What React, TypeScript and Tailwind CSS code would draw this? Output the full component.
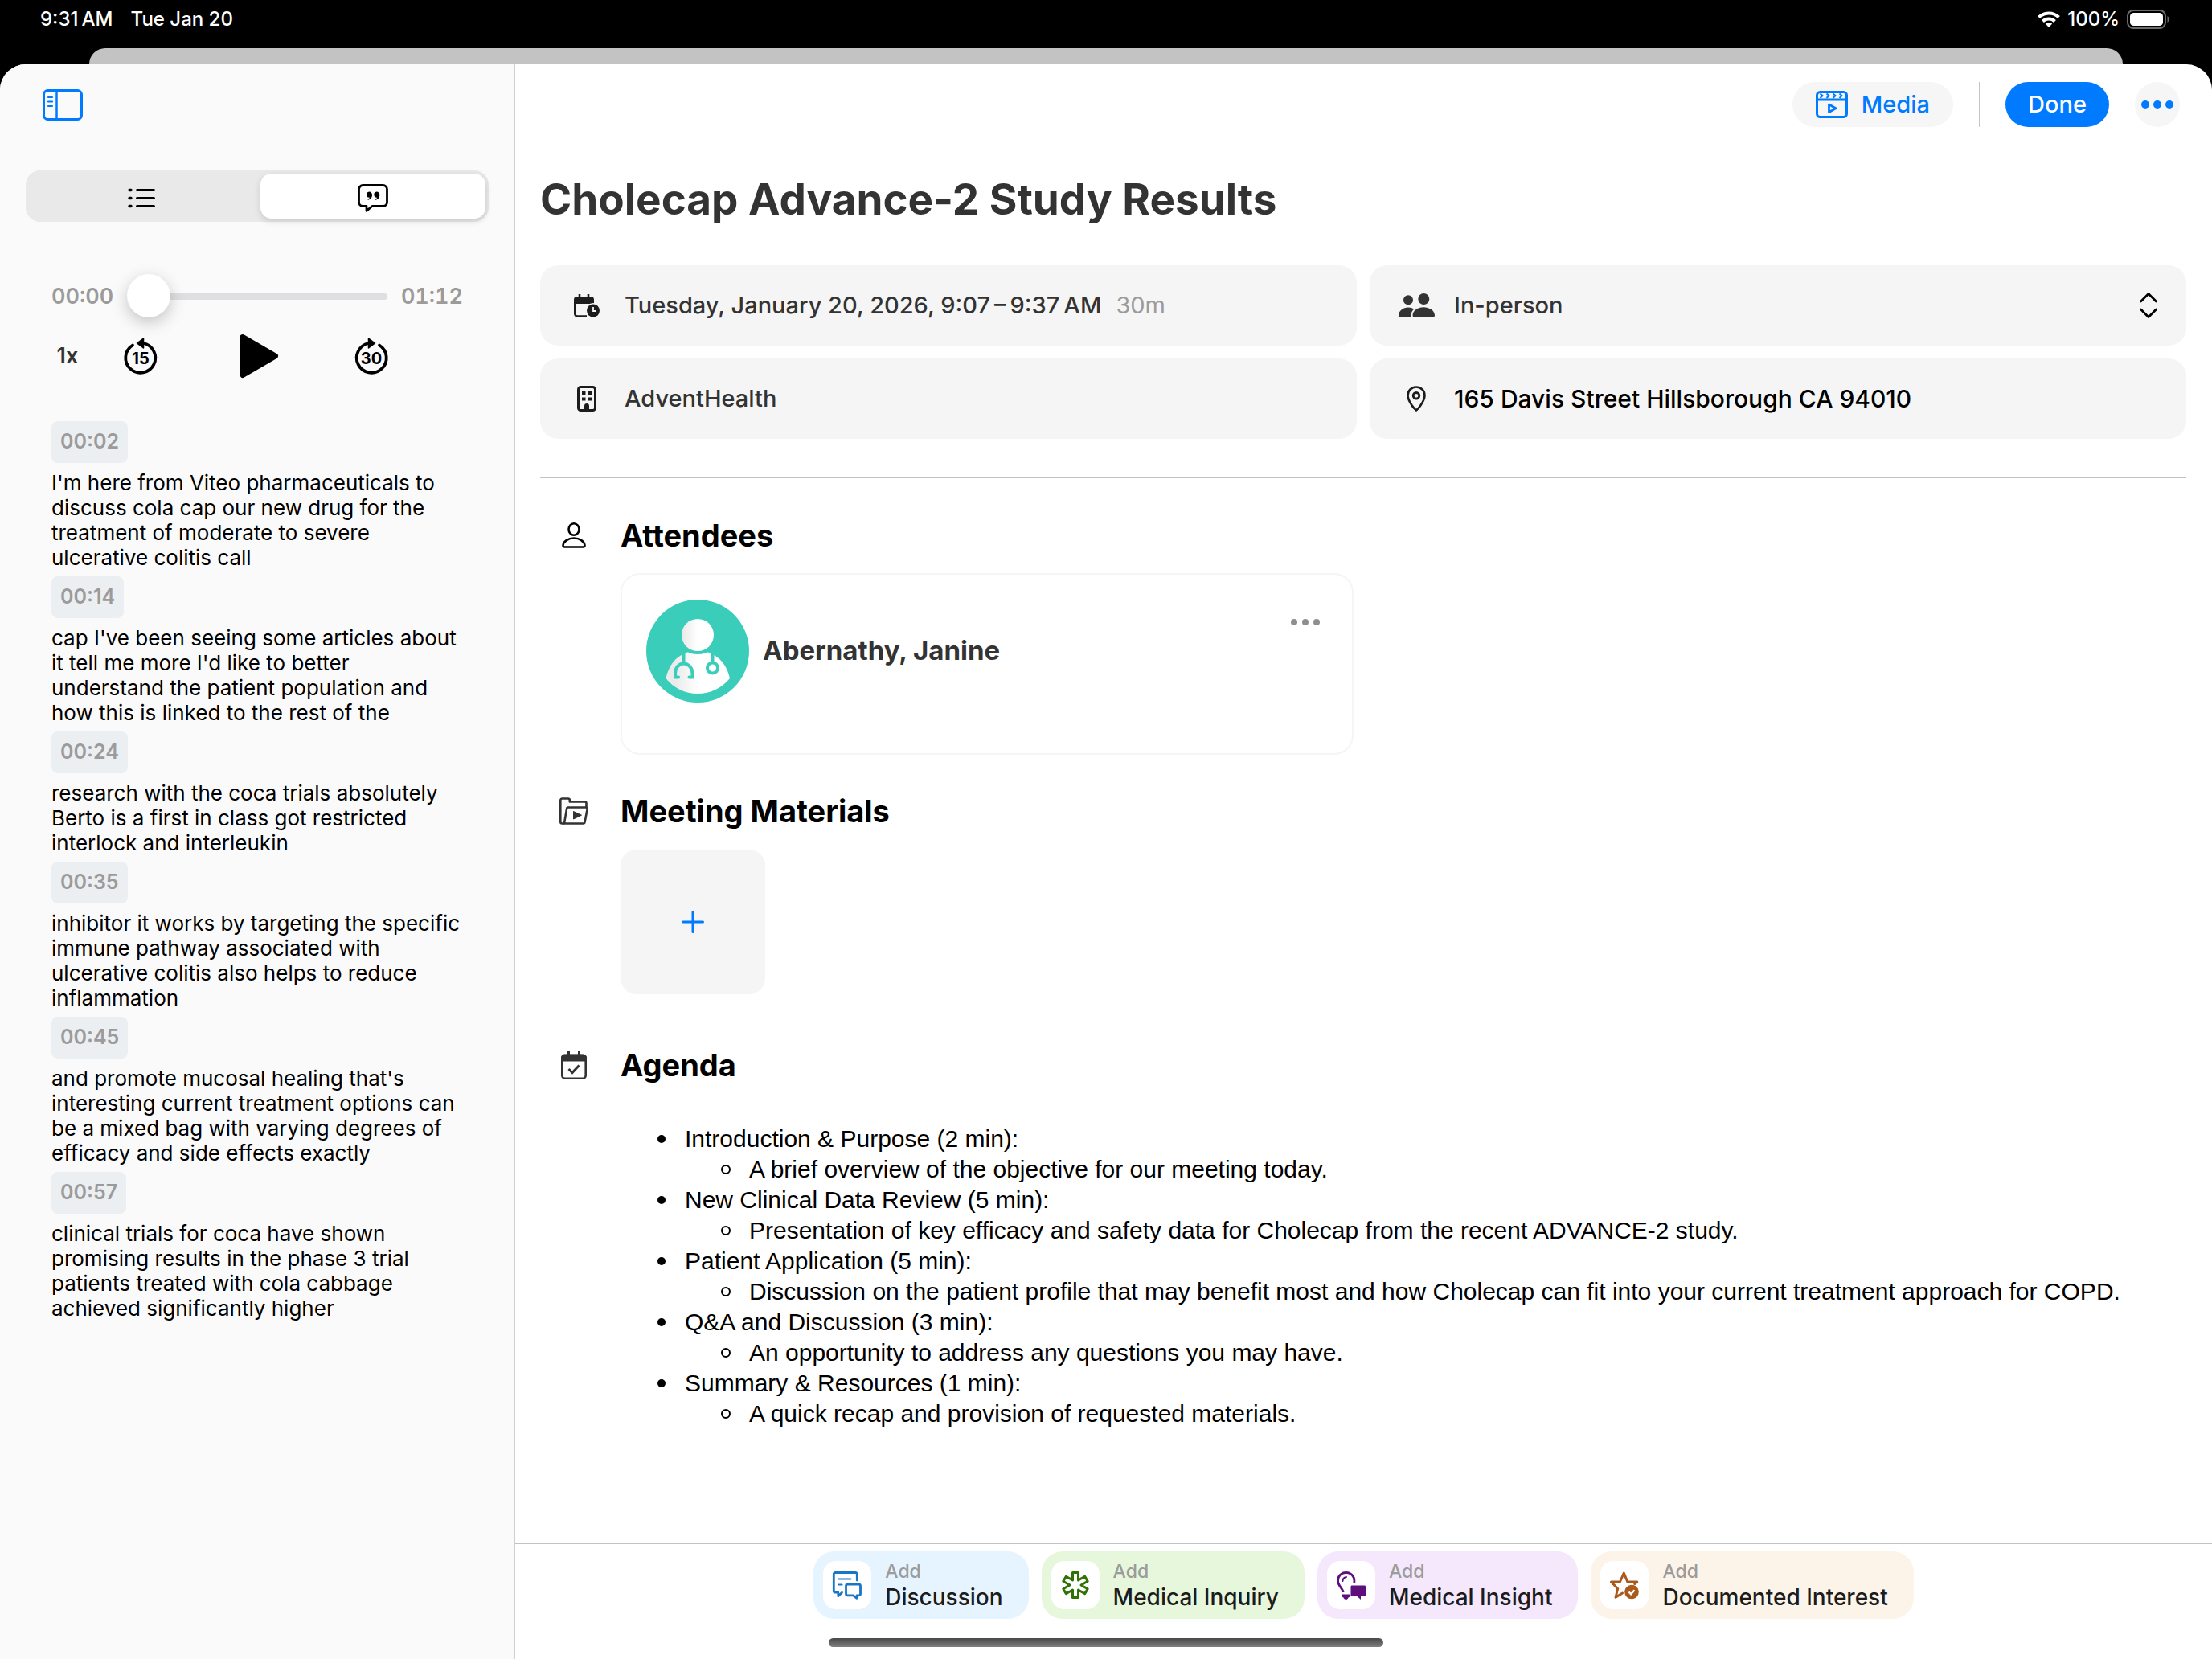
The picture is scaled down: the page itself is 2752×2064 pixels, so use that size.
import type { ReactNode } from "react";

const BLUE = "#007aff";

type IconProps = { w: number; h: number; children: ReactNode };

function Icon({ w, h, children }: IconProps) {
  return (
    <svg width={w} height={h} viewBox={`0 0 ${w} ${h}`} fill="none" aria-hidden="true" className="shrink-0 overflow-visible">
      {children}
    </svg>
  );
}

function WifiIcon() {
  return (
    <Icon w={28} h={20}>
      <g stroke="#fff" strokeWidth="4">
        <path d="M1.500 7.500a18 18 0 0 1 25 0" />
        <path d="M6.500 12.500a11 11 0 0 1 15 0" />
      </g>
      <path d="M14 20l-4.200-4.400a6 6 0 0 1 8.400 0z" fill="#fff" />
    </Icon>
  );
}

function BatteryIcon() {
  return (
    <Icon w={54} h={24}>
      <rect x="1" y="1" width="47" height="22" rx="7" stroke="#6b6b6b" strokeWidth="2" />
      <rect x="4" y="4" width="41" height="16" rx="4.500" fill="#fff" />
      <path d="M50.500 8v8a4.500 4.500 0 0 0 0-8z" fill="#6b6b6b" />
    </Icon>
  );
}

function SidebarIcon() {
  return (
    <Icon w={50} h={39}>
      <g stroke={BLUE} strokeWidth="3">
        <rect x="1.500" y="1.500" width="47" height="36" rx="5" />
        <path d="M17.500 2v35" strokeWidth="2.500" />
        <path d="M7 10h5M7 15.500h5M7 21h5" strokeWidth="2.200" strokeLinecap="round" />
      </g>
    </Icon>
  );
}

function ListIcon() {
  return (
    <Icon w={34} h={24}>
      <path d="M11.500 2.500h21M11.500 12.500h21M11.500 22.500h21" stroke="#000" strokeWidth="3" strokeLinecap="round" />
      <path d="M2 2.500h2M2 12.500h2M2 22.500h2" stroke="#000" strokeWidth="3.400" strokeLinecap="round" />
    </Icon>
  );
}

function QuoteIcon() {
  return (
    <Icon w={38} h={35}>
      <path
        d="M6.500 1.500h25a5 5 0 0 1 5 5v16a5 5 0 0 1-5 5H18l-7 5.800v-5.800H6.500a5 5 0 0 1-5-5v-16a5 5 0 0 1 5-5z"
        stroke="#000"
        strokeWidth="2.800"
        strokeLinejoin="round"
      />
      <path
        d="M14.300 9.500a3.700 3.700 0 0 1 3.700 3.900c0 3.400-2 5.800-5.200 6.300l-.4-1c1.500-.5 2.300-1.200 2.600-2a3.600 3.600 0 1 1-.7-7.200zM23.600 9.500a3.700 3.700 0 0 1 3.700 3.900c0 3.400-2 5.800-5.200 6.300l-.4-1c1.500-.5 2.300-1.200 2.600-2a3.600 3.600 0 1 1-.7-7.200z"
        fill="#000"
      />
    </Icon>
  );
}

function SkipIcon({ seconds, forward = false }: { seconds: number; forward?: boolean }) {
  return (
    <Icon w={44} h={48}>
      <g transform={forward ? "translate(44 0) scale(-1 1)" : undefined}>
        <path d="M25 8a18.500 18.500 0 1 1-13 2.500" stroke="#000" strokeWidth="3.800" strokeLinecap="round" />
        <path d="M17.500 8l8-6v12z" fill="#000" stroke="#000" strokeWidth="1.500" strokeLinejoin="round" />
      </g>
      <text x="22" y="33.500" textAnchor="middle" fontSize="20" fontWeight="700" fill="#000">
        {seconds}
      </text>
    </Icon>
  );
}

function PlayIcon() {
  return (
    <Icon w={48} h={54}>
      <path d="M4 3.500L44.500 27 4 50.500z" fill="#000" stroke="#000" strokeWidth="7" strokeLinejoin="round" />
    </Icon>
  );
}

function MediaIcon() {
  return (
    <Icon w={40} h={34}>
      <g stroke={BLUE} strokeWidth="3" strokeLinejoin="round">
        <rect x="1.500" y="1.500" width="37" height="31" rx="4" />
        <path d="M2 11h36" />
        <path d="M5.500 3.500l3 2.500-3 3M13.500 3.500l3 2.500-3 3M21.500 3.500l3 2.500-3 3M29.500 3.500l3 2.500-3 3" strokeWidth="2" />
        <path d="M16.500 17v9.500l8.500-4.800z" strokeWidth="2.800" />
      </g>
    </Icon>
  );
}

function DotsIcon({ color, r, gap }: { color: string; r: number; gap: number }) {
  const w = gap * 2 + r * 2;
  return (
    <Icon w={w} h={r * 2}>
      <circle cx={r} cy={r} r={r} fill={color} />
      <circle cx={r + gap} cy={r} r={r} fill={color} />
      <circle cx={r + gap * 2} cy={r} r={r} fill={color} />
    </Icon>
  );
}

function CalendarClockIcon() {
  return (
    <Icon w={33} h={29}>
      <path d="M7 0v6M18 0v6" stroke="#1c1c1c" strokeWidth="2.600" />
      <path d="M0 12V7a4 4 0 0 1 4-4h17a4 4 0 0 1 4 4v5z" fill="#1c1c1c" />
      <path d="M1.200 10v14.500a3 3 0 0 0 3 3H16" stroke="#1c1c1c" strokeWidth="2.400" />
      <circle cx="24" cy="20.500" r="9.500" fill="#f5f5f5" />
      <circle cx="24" cy="20.500" r="8" fill="#1c1c1c" />
      <path d="M24 16v5h4" stroke="#f5f5f5" strokeWidth="1.800" />
    </Icon>
  );
}

function BuildingIcon() {
  return (
    <Icon w={24} h={32}>
      <rect x="1.500" y="1.500" width="21" height="29" rx="3" stroke="#1c1c1c" strokeWidth="3" />
      <path d="M6 7h4.500v4H6zM13.500 7H18v4h-4.500zM6 14.500h4.500v4H6zM13.500 14.500H18v4h-4.500zM9 31v-6a3 3 0 0 1 6 0v6z" fill="#1c1c1c" />
    </Icon>
  );
}

function PeopleIcon() {
  return (
    <Icon w={45} h={30}>
      <g fill="#333">
        <circle cx="12" cy="8.300" r="6" />
        <circle cx="31.300" cy="7" r="7" />
        <path d="M17.500 29.500V27.500c0-5.600 6-10.300 13.700-10.300S45 21.900 45 27.500c0 1.300-.8 2-2 2H19.500c-1.200 0-2-.7-2-2z" />
        <path d="M0 27.500C0 22 5.400 17.500 12 17.500c2.700 0 5.200.7 7.200 2-2.400 2.200-3.700 5-3.700 8 0 .7.100 1.400.4 2H2c-1.200 0-2-.7-2-2z" />
      </g>
    </Icon>
  );
}

function PinIcon() {
  return (
    <Icon w={24} h={32}>
      <path
        d="M12 1.500c5.900 0 10.500 4.600 10.500 10.500 0 4.200-2.400 8.400-5 12.200-1.800 2.700-4 5-5.500 6.300-1.500-1.300-3.700-3.600-5.500-6.300-2.600-3.800-5-8-5-12.200C1.500 6.100 6.100 1.500 12 1.500z"
        stroke="#1c1c1c"
        strokeWidth="2.600"
        strokeLinejoin="round"
      />
      <circle cx="12" cy="12.300" r="3.800" stroke="#1c1c1c" strokeWidth="2.800" />
    </Icon>
  );
}

function ChevronsIcon() {
  return (
    <Icon w={22} h={32}>
      <path d="M1.500 11L11 1.500l9.500 9.500M1.500 21l9.500 9.500 9.500-9.500" stroke="#000" strokeWidth="2.800" strokeLinecap="round" strokeLinejoin="round" />
    </Icon>
  );
}

function PersonIcon() {
  return (
    <Icon w={30} h={32}>
      <g stroke="#000" strokeWidth="2.600">
        <ellipse cx="15" cy="8.500" rx="6.500" ry="7.200" />
        <path d="M1.500 28.500c.4-5 6.500-9 13.500-9s13.100 4 13.500 9c0 1.400-.8 2-2 2h-23c-1.200 0-2-.6-2-2z" />
      </g>
    </Icon>
  );
}

function FolderPlayIcon() {
  return (
    <Icon w={36} h={34}>
      <g stroke="#333" strokeWidth="2.600" strokeLinejoin="round">
        <path d="M6 32.500H3.300a2 2 0 0 1-2-2v-27a2 2 0 0 1 2-2h7.500a2 2 0 0 1 2 2V5.500h18.700a2 2 0 0 1 2 2V12" />
        <path d="M10.500 12.500h22.300a1.800 1.800 0 0 1 1.800 2.200l-3 16a2 2 0 0 1-2 1.800H6l3-18a2 2 0 0 1 1.500-2z" />
      </g>
      <path d="M17.500 17.500v9.500l10-4.800z" fill="#333" stroke="#333" strokeWidth="1" strokeLinejoin="round" />
    </Icon>
  );
}

function CalendarCheckIcon() {
  return (
    <Icon w={32} h={36}>
      <rect x="1.300" y="6" width="29.400" height="28.700" rx="3.500" stroke="#333" strokeWidth="2.600" />
      <path d="M0 13.500V9a4.500 4.500 0 0 1 4.500-4.500h23A4.500 4.500 0 0 1 32 9v4.500z" fill="#333" />
      <path d="M9.500 0v6M22.500 0v6" stroke="#333" strokeWidth="3" />
      <path d="M9.500 23l4.500 4.500 8.500-9" stroke="#333" strokeWidth="3" />
    </Icon>
  );
}

function DoctorAvatar() {
  return (
    <Icon w={128} h={128}>
      <defs>
        <linearGradient id="coat" gradientUnits="userSpaceOnUse" x1="26" y1="0" x2="64" y2="0">
          <stop offset="0.300" stopColor="#ebebeb" />
          <stop offset="1" stopColor="#fff" />
        </linearGradient>
        <linearGradient id="face" gradientUnits="userSpaceOnUse" x1="44" y1="0" x2="64" y2="0">
          <stop offset="0.100" stopColor="#ebebeb" />
          <stop offset="1" stopColor="#fff" />
        </linearGradient>
      </defs>
      <circle cx="64" cy="64" r="64" fill="#39cdba" />
      <circle cx="64" cy="44" r="20" fill="url(#face)" />
      <path
        d="M50 66c2-1 3 0 5 .7 6 1.800 12 1.800 18 0 2-.7 3-1.700 5-.7 14 5 23 17 26 32-10 12-24 19-40 19s-30-7-39.500-19C27.500 83 36 71 50 66z"
        fill="url(#coat)"
      />
      <g stroke="#39cdba" strokeWidth="4">
        <path d="M46.500 64v16" />
        <path d="M40 96.500h-4V92c0-7 4.500-12.500 10.500-12.500S57.500 85 57.500 92v4.500h-4" strokeLinecap="round" />
        <path d="M82.500 64v13" />
        <circle cx="82.500" cy="85" r="6.500" fill="#fff" />
      </g>
    </Icon>
  );
}

function DiscussionIcon() {
  return (
    <Icon w={36} h={34}>
      <g stroke="#1976c5" strokeWidth="2.800" strokeLinejoin="round" strokeLinecap="round">
        <path d="M30.300 11V3.500a2 2 0 0 0-2-2h-25a2 2 0 0 0-2 2v20.700a2 2 0 0 0 2 2h3.500v4.500l4.700-4.500" />
        <path d="M7.500 9.500h15M7.500 16.500h4" strokeWidth="2.200" />
        <path d="M18.500 16.200h14a2 2 0 0 1 2 2v9.600a2 2 0 0 1-2 2h-2.500v3.500l-4.500-3.500h-7a2 2 0 0 1-2-2v-9.600a2 2 0 0 1 2-2z" />
      </g>
    </Icon>
  );
}

// Six-armed star: two outer corners per arm and one inner corner between neighbours.
const ASTERISK_POINTS = [0, 1, 2, 3, 4, 5]
  .flatMap((arm) => {
    const a = (arm * Math.PI) / 3 - Math.PI / 2;
    const b = a + Math.PI / 6;
    const at = (l: number, w: number) => [18 + l * Math.cos(a) - w * Math.sin(a), 17 + l * Math.sin(a) + w * Math.cos(a)];
    return [at(15.5, -3.5), at(15.5, 3.5), [18 + 7 * Math.cos(b), 17 + 7 * Math.sin(b)]];
  })
  .map((p) => p.join(","))
  .join(" ");

function InquiryIcon() {
  return (
    <Icon w={36} h={34}>
      <polygon points={ASTERISK_POINTS} stroke="#2f7304" strokeWidth="3" strokeLinejoin="round" />
    </Icon>
  );
}

function InsightIcon() {
  return (
    <Icon w={36} h={35}>
      <path d="M8 26c0-5-6.500-7.500-6.500-14.500a10.200 10.200 0 0 1 20.400 0V15" stroke="#5f0f7c" strokeWidth="2.800" />
      <path d="M7.500 12c0-2.700 1.500-4.500 4.500-5" stroke="#5f0f7c" strokeWidth="2" strokeLinecap="round" />
      <path d="M6.500 28.500h10c0 3-1 4-2 4-.5 1.500-1.500 2.500-3 2.500s-2.500-1-3-2.500c-1 0-2-1-2-4z" fill="#5f0f7c" />
      <path d="M19 17.500h15.500c1 0 1.500.5 1.500 1.500v10.500c0 1-.5 1.500-1.500 1.500H30v4l-4.500-4H19c-1 0-1.500-.5-1.500-1.500V19c0-1 .5-1.500 1.500-1.500z" fill="#5f0f7c" />
    </Icon>
  );
}

function InterestIcon() {
  return (
    <Icon w={36} h={34}>
      <path
        d="M15.500 27L7 32.300l2.700-10.800L1.500 13h11L17.300 2l4.500 11h12l-3 2.500"
        stroke="#a9591b"
        strokeWidth="3"
        strokeLinejoin="round"
        strokeLinecap="round"
      />
      <circle cx="27" cy="25.500" r="8.800" fill="#a9591b" />
      <path d="M23.500 25.500l2.600 2.800 4.400-5" stroke="#fff" strokeWidth="2.400" />
    </Icon>
  );
}

const TRANSCRIPT = [
  { time: "00:02", lines: ["I'm here from Viteo pharmaceuticals to", "discuss cola cap our new drug for the", "treatment of moderate to severe", "ulcerative colitis call"] },
  { time: "00:14", lines: ["cap I've been seeing some articles about", "it tell me more I'd like to better", "understand the patient population and", "how this is linked to the rest of the"] },
  { time: "00:24", lines: ["research with the coca trials absolutely", "Berto is a first in class got restricted", "interlock and interleukin"] },
  { time: "00:35", lines: ["inhibitor it works by targeting the specific", "immune pathway associated with", "ulcerative colitis also helps to reduce", "inflammation"] },
  { time: "00:45", lines: ["and promote mucosal healing that's", "interesting current treatment options can", "be a mixed bag with varying degrees of", "efficacy and side effects exactly"] },
  { time: "00:57", lines: ["clinical trials for coca have shown", "promising results in the phase 3 trial", "patients treated with cola cabbage", "achieved significantly higher"] },
];

const AGENDA = [
  ["Introduction & Purpose (2 min):", "A brief overview of the objective for our meeting today."],
  ["New Clinical Data Review (5 min):", "Presentation of key efficacy and safety data for Cholecap from the recent ADVANCE-2 study."],
  ["Patient Application (5 min):", "Discussion on the patient profile that may benefit most and how Cholecap can fit into your current treatment approach for COPD."],
  ["Q&A and Discussion (3 min):", "An opportunity to address any questions you may have."],
  ["Summary & Resources (1 min):", "A quick recap and provision of requested materials."],
];

const ACTIONS = [
  { label: "Discussion", icon: <DiscussionIcon />, bg: "bg-[#e6f4ff]" },
  { label: "Medical Inquiry", icon: <InquiryIcon />, bg: "bg-[#e7f7dc]" },
  { label: "Medical Insight", icon: <InsightIcon />, bg: "bg-[#f5e8fd]" },
  { label: "Documented Interest", icon: <InterestIcon />, bg: "bg-[#fdf4e9]" },
];

function StatusBar() {
  return (
    <div className="flex h-12 items-center justify-between pl-[50px] pr-[52px] text-[24px] font-medium text-white">
      <div className="flex gap-[22px]">
        <span>9:31{"\u2009"}AM</span>
        <span>Tue Jan 20</span>
      </div>
      <div className="flex items-center gap-[9px]">
        <WifiIcon />
        <span>100%</span>
        <BatteryIcon />
      </div>
    </div>
  );
}

function Sidebar() {
  return (
    <aside className="w-[641px] shrink-0 border-r border-[#cfcfcf] bg-[#fafafa]">
      <div className="flex h-[100px] items-center px-[53px]">
        <button type="button" aria-label="Toggle sidebar">
          <SidebarIcon />
        </button>
      </div>

      <div className="mx-8 mt-8 grid h-16 grid-cols-2 rounded-[18px] bg-[#e9e9e9]">
        <button type="button" aria-label="Outline" className="flex items-center justify-center pt-1">
          <ListIcon />
        </button>
        <button type="button" aria-label="Transcript" aria-pressed="true" className="m-1 flex items-center justify-center rounded-[14px] bg-white pt-1 shadow-[0_3px_8px_rgba(0,0,0,0.14)]">
          <QuoteIcon />
        </button>
      </div>

      <div className="mt-[66px] px-16">
        <div className="flex h-[54px] items-center gap-[17px] text-[27px] font-semibold text-[#9b9b9b]">
          <span className="tabular-nums">00:00</span>
          <input
            type="range"
            min="0"
            max="72"
            defaultValue="0"
            aria-label="Playback position"
            className="h-[54px] min-w-0 flex-1 appearance-none bg-transparent [&::-webkit-slider-runnable-track]:h-2 [&::-webkit-slider-runnable-track]:rounded-full [&::-webkit-slider-runnable-track]:bg-[#dfdfe1] [&::-webkit-slider-thumb]:-mt-6 [&::-webkit-slider-thumb]:size-[54px] [&::-webkit-slider-thumb]:appearance-none [&::-webkit-slider-thumb]:rounded-full [&::-webkit-slider-thumb]:bg-white [&::-webkit-slider-thumb]:shadow-[0_6px_20px_rgba(0,0,0,0.22)]"
          />
          <span className="tabular-nums">01:12</span>
        </div>
        <div className="mt-5 flex h-[54px] items-center">
          <button type="button" className="w-10 text-[27px] font-semibold text-[#333]">
            1x
          </button>
          <button type="button" aria-label="Back 15 seconds" className="ml-[49px]">
            <SkipIcon seconds={15} />
          </button>
          <button type="button" aria-label="Play" className="ml-[101px]">
            <PlayIcon />
          </button>
          <button type="button" aria-label="Forward 30 seconds" className="ml-[94px]">
            <SkipIcon seconds={30} forward />
          </button>
        </div>
      </div>

      <div className="mt-[54px] flex flex-col gap-2 px-16">
        {TRANSCRIPT.map((entry) => (
          <div key={entry.time}>
            <button type="button" className="mb-[9px] flex h-[52px] items-center rounded-lg bg-[#ebeff2] px-[11px] text-[25px] font-semibold text-[#9b9b9b]">
              {entry.time}
            </button>
            <p className="text-[26px] leading-[31px] text-black">
              {entry.lines.map((line) => (
                <span key={line} className="block whitespace-nowrap">
                  {line}
                </span>
              ))}
            </p>
          </div>
        ))}
      </div>
    </aside>
  );
}

function Toolbar() {
  return (
    <header className="flex h-[101px] items-center justify-end border-b border-[#b3b3b3] pr-10">
      <button type="button" className="flex h-14 items-center gap-[17px] rounded-full bg-[#f6f6f6] px-[29px] text-[29px] font-medium text-[#007aff]">
        <MediaIcon />
        Media
      </button>
      <div className="ml-8 h-14 w-px bg-[#c4c4c4]" />
      <button type="button" className="ml-8 h-14 rounded-full bg-[#007aff] px-7 text-[29px] font-medium text-white">
        Done
      </button>
      <button type="button" aria-label="More options" className="ml-8 flex size-14 items-center justify-center rounded-full bg-[#f6f6f6]">
        <DotsIcon color={BLUE} r={5} gap={15} />
      </button>
    </header>
  );
}

function Field({ icon, children }: { icon: ReactNode; children: ReactNode }) {
  return (
    <div className="flex h-[100px] items-center rounded-[22px] bg-[#f5f5f5] pr-9 pl-8 text-[29px] text-[#333]">
      <span className="mr-[21px] flex w-[52px] justify-center">{icon}</span>
      {children}
    </div>
  );
}

function SectionTitle({ icon, children }: { icon: ReactNode; children: ReactNode }) {
  return (
    <div className="flex h-12 items-center">
      <span className="flex w-[84px] justify-center">{icon}</span>
      <h2 className="ml-4 text-[38px] font-bold text-black">{children}</h2>
    </div>
  );
}

function Details() {
  return (
    <main className="flex-1 pr-8 pl-[31px]">
      <h1 className="mt-[31px] text-[53px] leading-[72px] font-bold text-[#333]">Cholecap Advance-2 Study Results</h1>

      <div className="mt-[46px] grid grid-cols-2 gap-4">
        <Field icon={<CalendarClockIcon />}>
          <span className="font-medium">
            Tuesday, January 20, 2026, 9:07{"\u2009"}–{"\u2009"}9:37{"\u2009"}AM
          </span>
          <span className="ml-[18px] text-[#9b9b9b]">30m</span>
        </Field>
        <Field icon={<PeopleIcon />}>
          <select aria-label="Meeting type" className="h-full flex-1 appearance-none bg-transparent font-medium outline-none">
            <option>In-person</option>
          </select>
          <ChevronsIcon />
        </Field>
        <Field icon={<BuildingIcon />}>
          <span className="font-medium">AdventHealth</span>
        </Field>
        <Field icon={<PinIcon />}>
          <span className="text-[30px] font-medium text-black">165 Davis Street Hillsborough CA 94010</span>
        </Field>
      </div>

      <hr className="mt-12 border-[#c2c2c2]" />

      <section className="mt-[47px]">
        <SectionTitle icon={<PersonIcon />}>Attendees</SectionTitle>
        <div className="mt-[23px] ml-[100px] flex h-[226px] w-[912px] items-start rounded-3xl border-2 border-[#f5f5f5] px-[30px] pt-[31px]">
          <DoctorAvatar />
          <span className="ml-[17px] flex h-32 items-center text-[33px] font-bold text-[#333]">Abernathy, Janine</span>
          <button type="button" aria-label="Attendee options" className="mt-6 mr-[10px] ml-auto">
            <DotsIcon color="#8e8e8e" r={4} gap={14} />
          </button>
        </div>
      </section>

      <section className="mt-[46px]">
        <SectionTitle icon={<FolderPlayIcon />}>Meeting Materials</SectionTitle>
        <button type="button" aria-label="Add material" className="mt-6 ml-[100px] flex size-[180px] items-center justify-center rounded-[20px] bg-[#f5f5f5]">
          <Icon w={28} h={28}>
            <path d="M14 1.500v25M1.500 14h25" stroke={BLUE} strokeWidth="3" strokeLinecap="round" />
          </Icon>
        </button>
      </section>

      <section className="mt-16">
        <SectionTitle icon={<CalendarCheckIcon />}>Agenda</SectionTitle>
        <ul className="mt-[49px] ml-[100px] pl-20 font-['Liberation_Sans',sans-serif] text-[30px] leading-[38px] text-black">
          {AGENDA.map(([topic, note]) => (
            <li
              key={topic}
              className="before:mr-6 before:mb-1 before:-ml-[34px] before:inline-block before:size-[10px] before:rounded-full before:bg-black before:align-middle before:content-['']"
            >
              {topic}
              <ul className="pl-20">
                <li className="before:mr-[23px] before:mb-1 before:-ml-[35px] before:inline-block before:size-3 before:rounded-full before:border-2 before:border-black before:align-middle before:content-['']">
                  {note}
                </li>
              </ul>
            </li>
          ))}
        </ul>
      </section>
    </main>
  );
}

function ActionBar() {
  return (
    <footer className="flex justify-center gap-4 border-t border-[#c2c2c2] pt-[9px] pb-[50px]">
      {ACTIONS.map(({ label, icon, bg }) => (
        <button key={label} type="button" className={`flex h-[84px] items-center rounded-[26px] pr-8 pl-3 text-left ${bg}`}>
          <span className="flex size-[60px] items-center justify-center rounded-2xl bg-white">{icon}</span>
          <span className="ml-[17px] flex flex-col">
            <span className="text-[23px] leading-[30px] font-medium text-[#9b9b9b]">Add</span>
            <span className="text-[28px] leading-[34px] font-medium text-[#1c1c1c]">{label}</span>
          </span>
        </button>
      ))}
    </footer>
  );
}

export default function App() {
  return (
    <div className="relative flex min-h-screen flex-col bg-black font-['Inter',sans-serif]">
      <StatusBar />
      <div className="mx-[111px] mt-3 h-5 rounded-t-[20px] bg-[#c3c3c3]" />
      <div className="flex flex-1 overflow-hidden rounded-t-[32px] bg-white">
        <Sidebar />
        <div className="flex min-w-0 flex-1 flex-col">
          <Toolbar />
          <Details />
          <ActionBar />
        </div>
      </div>
      <div className="absolute bottom-[15px] left-1/2 h-[11px] w-[690px] -translate-x-1/2 rounded-full bg-linear-to-b from-[#484848] to-[#808080]" />
    </div>
  );
}
